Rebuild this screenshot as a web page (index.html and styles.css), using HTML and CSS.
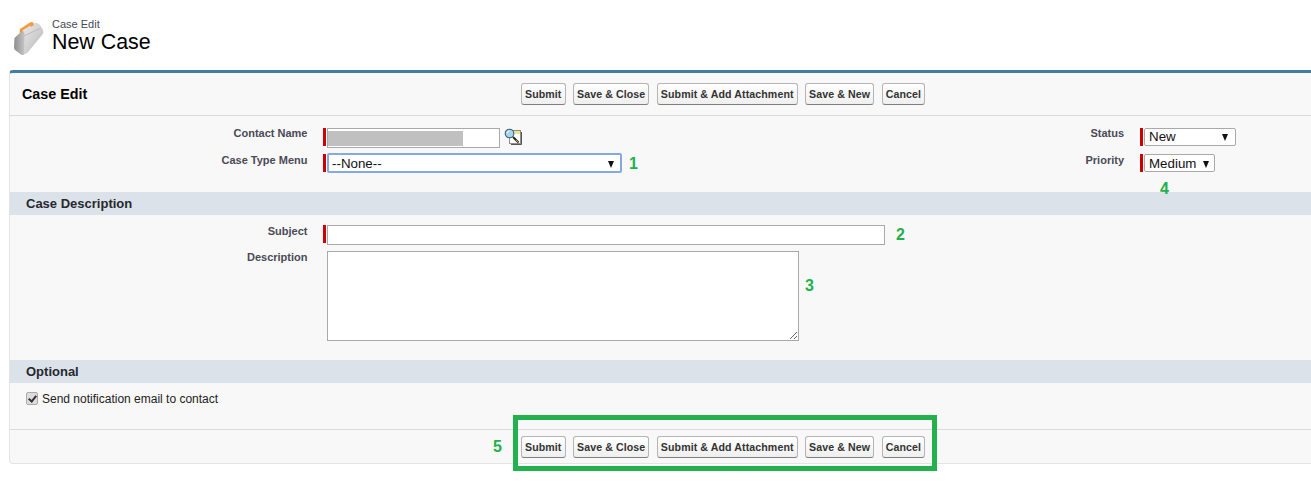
FILE: index.html
```html
<!DOCTYPE html>
<html lang="en">
<head>
  <meta charset="UTF-8" />
  <title>New Case</title>
  <link rel="stylesheet" href="styles.css">
</head>
<body>
  <div class="page-head">
    <svg class="case-icon" width="32" height="35" viewBox="0 0 32 35">
      <defs>
        <linearGradient id="boxFace" x1="0" y1="0" x2="1" y2="1">
          <stop offset="0" stop-color="#ececec"/>
          <stop offset="0.55" stop-color="#cfcfcf"/>
          <stop offset="1" stop-color="#a0a0a0"/>
        </linearGradient>
        <linearGradient id="boxEnd" x1="0" y1="0" x2="1" y2="0">
          <stop offset="0" stop-color="#8e8e8e"/>
          <stop offset="1" stop-color="#c4c4c4"/>
        </linearGradient>
      </defs>
      <path d="M9 10 L20 2.5 Q24 0.5 27 4 L30 9 Q31 12 29 14 L15 31 Q12 34 10 33 L9 22 Z" fill="url(#boxFace)"/>
      <path d="M1.5 17 L9 10 Q11 10 11.5 13 L11 33.5 Q10 34.5 8 33.5 L2 29 Q1 28 1 26 Z" fill="url(#boxEnd)"/>
      <path d="M11 15 L28 7" stroke="#b5b5b5" stroke-width="0.8" fill="none"/>
      <path d="M6.5 12 L7 8 L17 1.5 Q19.5 0.5 20.5 2 L20.5 4.5 L17.5 6 L17.5 4.5 L9.5 9.5 L10 11 Z" fill="#ef9b3f"/>
    </svg>
    <div class="titles">
      <div class="crumb">Case Edit</div>
      <h1>New Case</h1>
    </div>
  </div>

  <div class="panel">
    <div class="button-bar top-bar">
      <h2>Case Edit</h2>
      <div class="buttons">
        <button>Submit</button>
        <button>Save &amp; Close</button>
        <button>Submit &amp; Add Attachment</button>
        <button>Save &amp; New</button>
        <button>Cancel</button>
      </div>
    </div>

    <div class="fields-top">
      <div class="col-left">
        <div class="row">
          <label>Contact Name</label>
          <div class="required">
            <div class="text-input contact"><span class="redacted"></span></div>
            <svg class="lookup" width="18" height="18" viewBox="0 0 18 18">
              <rect x="5.5" y="2.5" width="11" height="13" fill="#fff" stroke="#8c8c8c"/>
              <path d="M17.5 4 V16.5 H7" stroke="#555" fill="none"/>
              <rect x="10" y="3" width="6" height="3" fill="#f9dd90"/>
              <path d="M9 9 L14.5 14.5" stroke="#222" stroke-width="2"/>
              <path d="M12 12 L14.5 14.5" stroke="#c98a4a" stroke-width="1"/>
              <circle cx="5.5" cy="5.5" r="4.3" fill="#a8d4ee" stroke="#35607e" stroke-width="1.1"/>
              <path d="M3.2 5 Q3.6 3.4 5.4 3" stroke="#eaf6fd" stroke-width="1.2" fill="none"/>
            </svg>
          </div>
        </div>
        <div class="row">
          <label>Case Type Menu</label>
          <div class="required">
            <div class="select focused type-menu">--None--<i class="arrow"></i></div>
            <span class="note">1</span>
          </div>
        </div>
      </div>
      <div class="col-right">
        <div class="row">
          <label>Status</label>
          <div class="required">
            <div class="select status">New<i class="arrow"></i></div>
          </div>
        </div>
        <div class="row">
          <label>Priority</label>
          <div class="required">
            <div class="select priority">Medium<i class="arrow"></i></div>
          </div>
        </div>
        <span class="note note-four">4</span>
      </div>
    </div>

    <h3 class="section-head">Case Description</h3>
    <div class="fields-desc">
      <div class="row">
        <label>Subject</label>
        <div class="required">
          <div class="text-input subject"></div>
          <span class="note">2</span>
        </div>
      </div>
      <div class="row">
        <label>Description</label>
        <div class="plain">
          <textarea class="description"></textarea>
          <span class="note note-three">3</span>
        </div>
      </div>
    </div>

    <h3 class="section-head">Optional</h3>
    <div class="fields-optional">
      <input type="checkbox" class="check" checked>
      <span>Send notification email to contact</span>
    </div>

    <div class="button-bar bottom-bar">
      <span class="note note-five">5</span>
      <div class="buttons">
        <button>Submit</button>
        <button>Save &amp; Close</button>
        <button>Submit &amp; Add Attachment</button>
        <button>Save &amp; New</button>
        <button>Cancel</button>
      </div>
    </div>
  </div>

  <div class="highlight"></div>
</body>
</html>
```

FILE: styles.css
```css
/* Base styles */
body {
  margin: 0;
  height: 482px;
  overflow: hidden;
  position: relative;
  background-color: #fff;
  font-family: 'Liberation Sans', Arial, sans-serif;
  font-size: 12px;
  color: #222;
}
.page-head {
  display: flex;
  height: 70px;
  padding: 18px 0 0 13px;
  box-sizing: border-box;
}
.case-icon {
  margin-top: 3px;
}
.titles {
  margin-left: 7px;
}
.crumb {
  font-size: 11px;
  line-height: 13px;
  color: #4a4a56;
}
h1 {
  margin: 0;
  font-size: 21.4px;
  line-height: 22px;
  font-weight: 400;
  color: #000;
}

/* Panel */
.panel {
  margin-left: 9px;
  height: 394px;
  box-sizing: border-box;
  background-color: #f8f8f8;
  border-top: 3px solid #437ea2;
  border-left: 1px solid #e4e4e4;
  border-bottom: 1px solid #e4e4e4;
  border-radius: 4px 0 0 4px;
}
.button-bar {
  display: flex;
  align-items: center;
  position: relative;
}
.top-bar {
  height: 42px;
  border-bottom: 1px solid #dbdbdb;
  padding-left: 12px;
}
.top-bar h2 {
  margin: 0;
  width: 499px;
  font-size: 14.3px;
  font-weight: 700;
  color: #000;
}
.bottom-bar {
  height: 33px;
  border-top: 1px solid #dbdbdb;
  padding-left: 511px;
}
.buttons {
  display: flex;
  gap: 7.5px;
}
button {
  height: 22px;
  padding: 0 3px;
  font-family: inherit;
  font-size: 10.6px;
  font-weight: 700;
  color: #333;
  letter-spacing: 0.1px;
  border: 1px solid #b5b5b5;
  border-bottom-color: #7f7f7f;
  border-radius: 3px;
  background: linear-gradient(#fff, #efefef);
  white-space: nowrap;
}

/* Form rows */
.row {
  display: flex;
}
.row label {
  width: 297.5px;
  flex: none;
  text-align: right;
  font-size: 11px;
  font-weight: 700;
  line-height: 13px;
  color: #4a4a56;
}
.row:first-child label {
  margin-top: -1px;
}
.fields-desc .row:first-child label {
  margin-top: 0;
}
.required {
  display: flex;
  align-items: flex-start;
  position: relative;
  height: 18px;
  margin-left: 15.5px;
  padding-left: 1px;
  border-left: 3px solid #c00;
}
.plain {
  display: flex;
  align-items: flex-start;
  margin-left: 19.5px;
}
.text-input, .select, .description {
  box-sizing: border-box;
  background-color: #fff;
  border: 1px solid #a9a9a9;
}
.text-input {
  height: 20px;
}
.select {
  display: flex;
  align-items: center;
  justify-content: space-between;
  height: 18px;
  padding: 0 7px 2px 4px;
  font-size: 13.33px;
  color: #111;
  border-radius: 2px;
}
.arrow {
  width: 0;
  height: 0;
  margin-top: 2px;
  border-left: 3.5px solid transparent;
  border-right: 3.5px solid transparent;
  border-top: 7px solid #111;
}
.focused {
  height: 20px;
  margin-top: -1px;
  border: 2px solid #85a9e2;
  padding: 0 6px 0 3px;
}
.note {
  color: #22b14c;
  font-size: 16px;
  font-weight: 700;
  line-height: 20px;
}

.fields-top {
  display: flex;
  justify-content: space-between;
  height: 76px;
  box-sizing: border-box;
  padding-top: 12px;
}
.fields-top .row {
  height: 26px;
}
.contact {
  width: 173px;
  padding-top: 2px;
}
.redacted {
  display: block;
  width: 135px;
  height: 15px;
  background-color: #c0c0c0;
}
.lookup {
  margin-left: 4px;
}
.type-menu {
  width: 295px;
}
.type-menu + .note {
  margin-left: 7px;
}
.col-right {
  position: relative;
  width: 171px;
}
.col-right .row label {
  width: auto;
  flex: 0 0 0;
  position: absolute;
  right: 187px;
  white-space: nowrap;
}
.col-right .required {
  margin-left: 0;
}
.status {
  width: 92px;
}
.priority {
  width: 71px;
  padding: 0 5px 0 4px;
}
.note-four {
  position: absolute;
  left: 20px;
  top: 51px;
}

.section-head {
  margin: 0;
  height: 23px;
  padding-left: 16px;
  background-color: #dbe2e9;
  font-size: 13px;
  line-height: 24px;
  font-weight: 700;
  color: #27282e;
}
.fields-desc {
  height: 145px;
  box-sizing: border-box;
  padding-top: 10px;
}
.fields-desc .row:first-child {
  height: 26px;
}
.subject {
  width: 558px;
}
.subject + .note {
  margin-left: 11px;
}
.description {
  display: block;
  width: 472px;
  height: 90px;
  margin: 0;
  padding: 0;
  resize: both;
}
.note-three {
  margin: 25px 0 0 6px;
}
.fields-optional {
  display: flex;
  align-items: flex-start;
  height: 46px;
  box-sizing: border-box;
  padding: 9px 0 0 16px;
  line-height: 14px;
}
.check {
  appearance: none;
  position: relative;
  width: 12px;
  height: 13px;
  margin: 0 4px 0 0;
  background-color: #ddd;
  border: 1px solid #aaa;
  border-radius: 2px;
}
.check::after {
  content: "";
  position: absolute;
  left: 3px;
  top: 1px;
  width: 3px;
  height: 6px;
  border: solid #333;
  border-width: 0 2px 2px 0;
  transform: rotate(40deg);
}
.note-five {
  position: absolute;
  left: 483px;
  top: 7px;
}

/* Green box drawn over the bottom buttons */
.highlight {
  position: absolute;
  left: 513px;
  top: 415px;
  width: 424px;
  height: 56px;
  box-sizing: border-box;
  border: 5px solid #22b14c;
}
```
